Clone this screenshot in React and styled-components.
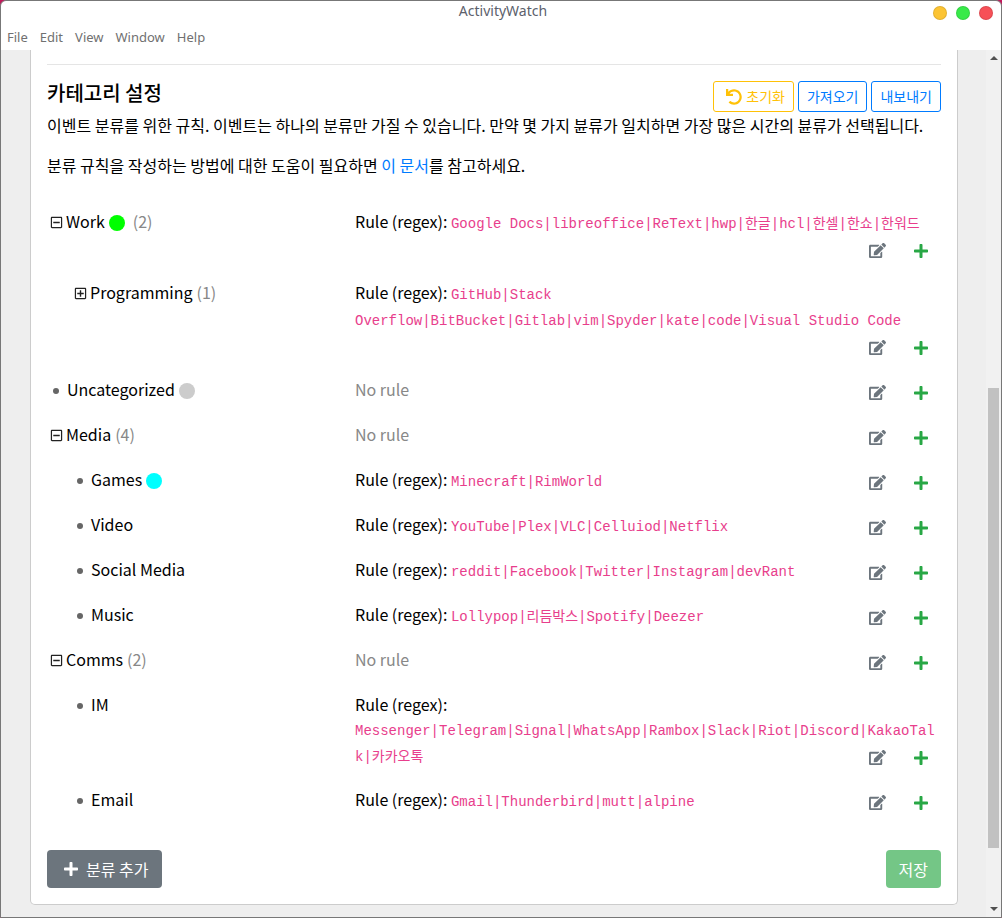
import React from "react";
import styled, { createGlobalStyle } from "styled-components";
import {
  FaEdit,
  FaPlus,
  FaUndo,
  FaRegPlusSquare,
  FaRegMinusSquare,
} from "react-icons/fa";

const GlobalStyle = createGlobalStyle`
  * {
    box-sizing: border-box;
  }
  body {
    margin: 0;
    background-color: #c2185b;
    color: #000000;
    font-family: "Noto Sans CJK KR", sans-serif;
    font-size: 16px;
    line-height: 1.5;
  }
`;

const Window = styled.div`
  display: flex;
  flex-direction: column;
  min-height: 100vh;
  border: 1px solid #777777;
  border-radius: 6px 6px 0 0;
  background-color: #ffffff;
  overflow: hidden;
`;

const TitleBar = styled.header`
  display: grid;
  grid-template-columns: 1fr auto 1fr;
  align-items: center;
  height: 24px;
  padding: 0 8px;
  color: #5c616c;
  font-family: "Noto Sans", sans-serif;
  font-size: 14px;
`;

const Title = styled.span`
  grid-column: 2;
  line-height: 20px;
  padding: 0 0 4px 4px;
`;

const WindowButtons = styled.div`
  display: flex;
  justify-content: flex-end;
  gap: 9px;
`;

const WindowButton = styled.button`
  width: 14px;
  height: 14px;
  padding: 0;
  border: 1px solid rgba(0, 0, 0, 0.1);
  border-radius: 50%;
  background-color: ${(props) => props.$color};
`;

const MenuBar = styled.nav`
  display: flex;
  align-items: flex-start;
  gap: 12px;
  height: 25px;
  padding: 0 6px;
`;

const MenuItem = styled.button`
  padding: 0;
  border: 0;
  background: none;
  color: #707070;
  font-family: "Noto Sans", sans-serif;
  font-size: 13px;
  line-height: 24px;
`;

const Body = styled.div`
  display: flex;
  flex: 1;
  background-color: #eeeeee;
`;

const Page = styled.main`
  flex: 1;
  min-width: 0;
  padding: 0 28px 12px 29px;
`;

const Card = styled.div`
  padding: 14px 16px 16px;
  border: 1px solid #cccccc;
  border-top: 0;
  border-radius: 0 0 5px 5px;
  background-color: #ffffff;
`;

const Divider = styled.hr`
  margin: 0 0 16px;
  border: 0;
  border-top: 1px solid #e5e5e5;
`;

const Heading = styled.div`
  display: flex;
  justify-content: space-between;
  align-items: flex-start;
  height: 32px;
`;

const HeadingText = styled.h5`
  margin: 0;
  font-size: 20px;
  font-weight: 500;
  line-height: 24px;
`;

const HeadingButtons = styled.div`
  display: flex;
  gap: 4px;
`;

const OutlineButton = styled.button`
  display: flex;
  align-items: center;
  gap: 4px;
  height: 31px;
  padding: ${(props) => (props.$icon ? "0 8px 0 12px" : "0 8px")};
  border: 1px solid ${(props) => props.$color};
  border-radius: 3px;
  background-color: #ffffff;
  color: ${(props) => props.$color};
  font-family: inherit;
  font-size: 14px;
  line-height: 21px;
`;

const Paragraph = styled.p`
  margin: 0 0 16px;
`;

const Link = styled.a`
  color: #007bff;
  text-decoration: none;
`;

const Categories = styled.div`
  padding: 16px 0 18px;
`;

const Row = styled.div`
  display: grid;
  grid-template-columns: 308px 1fr;
`;

const Name = styled.div`
  display: flex;
  align-items: center;
  height: 24px;
  padding-left: ${(props) => (props.$depth ? "27px" : "3px")};
`;

const Toggle = styled.button`
  display: flex;
  padding: 2px 0 0;
  margin-right: 3px;
  border: 0;
  background: none;
  color: #222222;
`;

const Bullet = styled.span`
  width: 6px;
  height: 6px;
  margin: 3px 8px 0 3px;
  border-radius: 50%;
  background-color: #666666;
`;

const Dot = styled.span`
  width: 16px;
  height: 16px;
  margin: 3px 4px 0;
  border-radius: 50%;
  background-color: ${(props) => props.$color};
`;

const Count = styled.span`
  margin-left: 4px;
  color: #888888;
`;

const Rule = styled.div`
  min-width: 0;
  overflow-wrap: anywhere;

  &::after {
    content: "";
    display: block;
    clear: both;
  }
`;

const NoRule = styled.span`
  color: #888888;
`;

const Code = styled.code`
  color: #e83e8c;
  font-family: "Liberation Mono", "Noto Sans CJK KR", monospace;
  font-size: 14px;
`;

const Actions = styled.div`
  display: flex;
  float: right;
  align-items: flex-start;
  gap: 3px;
  height: 45px;
`;

const IconButton = styled.button`
  display: flex;
  align-items: center;
  height: 31px;
  padding: 0 12px;
  border: 0;
  background: none;
  color: ${(props) => props.$color};
`;

const Footer = styled.div`
  display: flex;
  justify-content: space-between;
`;

const Button = styled.button`
  display: flex;
  align-items: center;
  gap: 7px;
  height: 38px;
  padding: ${(props) => (props.$icon ? "0 14px 0 16px" : "0 13px")};
  border: 0;
  border-radius: 4px;
  background-color: ${(props) => props.$color};
  color: #ffffff;
  font-family: inherit;
  font-size: 16px;
  line-height: 24px;
`;

const ScrollBar = styled.div`
  display: flex;
  flex-direction: column;
  align-items: center;
  width: 15px;
  padding: 6px 0;
  background-color: #f1f1f1;
`;

const Arrow = styled.svg`
  display: block;
  width: 8px;
  height: 4px;
  fill: #505050;
`;

const Track = styled.div`
  display: flex;
  flex: 1;
  flex-direction: column;
  width: 11px;

  &::before {
    content: "";
    flex: 328;
  }
  &::after {
    content: "";
    flex: 59;
  }
`;

const Thumb = styled.div`
  flex: 460;
  background-color: #c1c1c1;
`;

const menus = ["File", "Edit", "View", "Window", "Help"];

const categories = [
  {
    name: "Work",
    color: "#00ff00",
    count: 2,
    open: true,
    rule: "Google Docs|libreoffice|ReText|hwp|한글|hcl|한셀|한쇼|한워드",
  },
  {
    name: "Programming",
    depth: 1,
    count: 1,
    rule: "GitHub|Stack Overflow|BitBucket|Gitlab|vim|Spyder|kate|code|Visual Studio Code",
  },
  { name: "Uncategorized", color: "#cccccc" },
  { name: "Media", count: 4, open: true },
  { name: "Games", depth: 1, color: "#00ffff", rule: "Minecraft|RimWorld" },
  { name: "Video", depth: 1, rule: "YouTube|Plex|VLC|Celluiod|Netflix" },
  {
    name: "Social Media",
    depth: 1,
    rule: "reddit|Facebook|Twitter|Instagram|devRant",
  },
  { name: "Music", depth: 1, rule: "Lollypop|리듬박스|Spotify|Deezer" },
  { name: "Comms", count: 2, open: true },
  {
    name: "IM",
    depth: 1,
    rule: "Messenger|Telegram|Signal|WhatsApp|Rambox|Slack|Riot|Discord|KakaoTalk|카카오톡",
  },
  { name: "Email", depth: 1, rule: "Gmail|Thunderbird|mutt|alpine" },
];

const CategoryRow = ({ name, depth, color, count, open, rule }) => (
  <Row>
    <Name $depth={depth}>
      {count ? (
        <Toggle aria-label={open ? "Collapse" : "Expand"}>
          {open ? <FaRegMinusSquare size={13} /> : <FaRegPlusSquare size={13} />}
        </Toggle>
      ) : (
        <Bullet />
      )}
      {name}
      {color && <Dot $color={color} />}
      {count && <Count>({count})</Count>}
    </Name>
    <Rule>
      {rule ? (
        <>
          Rule (regex): <Code>{rule}</Code>
        </>
      ) : (
        <NoRule>No rule</NoRule>
      )}
      <Actions>
        <IconButton $color="#6c757d" aria-label="Edit">
          <FaEdit size={17} />
        </IconButton>
        <IconButton $color="#28a745" aria-label="Add">
          <FaPlus size={16} />
        </IconButton>
      </Actions>
    </Rule>
  </Row>
);

const App = () => (
  <>
    <GlobalStyle />
    <Window>
      <TitleBar>
        <Title>ActivityWatch</Title>
        <WindowButtons>
          <WindowButton $color="#fcc433" aria-label="Minimize" />
          <WindowButton $color="#38ea49" aria-label="Maximize" />
          <WindowButton $color="#f75057" aria-label="Close" />
        </WindowButtons>
      </TitleBar>
      <MenuBar>
        {menus.map((menu) => (
          <MenuItem key={menu}>{menu}</MenuItem>
        ))}
      </MenuBar>
      <Body>
        <Page>
          <Card>
            <Divider />
            <Heading>
              <HeadingText>카테고리 설정</HeadingText>
              <HeadingButtons>
                <OutlineButton $color="#ffc107" $icon>
                  <FaUndo size={16} />
                  초기화
                </OutlineButton>
                <OutlineButton $color="#007bff">가져오기</OutlineButton>
                <OutlineButton $color="#007bff">내보내기</OutlineButton>
              </HeadingButtons>
            </Heading>
            <Paragraph>
              이벤트 분류를 위한 규칙. 이벤트는 하나의 분류만 가질 수 있습니다.
              만약 몇 가지 뷴류가 일치하면 가장 많은 시간의 뷴류가 선택됩니다.
            </Paragraph>
            <Paragraph>
              분류 규칙을 작성하는 방법에 대한 도움이 필요하면{" "}
              <Link href="#docs">이 문서</Link>를 참고하세요.
            </Paragraph>
            <Categories>
              {categories.map((category) => (
                <CategoryRow key={category.name} {...category} />
              ))}
            </Categories>
            <Footer>
              <Button $color="#6c757d" $icon>
                <FaPlus size={16} />
                분류 추가
              </Button>
              <Button $color="#74c686">저장</Button>
            </Footer>
          </Card>
        </Page>
        <ScrollBar>
          <Arrow viewBox="0 0 8 4">
            <path d="M0 4 L4 0 L8 4 Z" />
          </Arrow>
          <Track>
            <Thumb />
          </Track>
          <Arrow viewBox="0 0 8 4">
            <path d="M0 0 L4 4 L8 0 Z" />
          </Arrow>
        </ScrollBar>
      </Body>
    </Window>
  </>
);

export default App;
